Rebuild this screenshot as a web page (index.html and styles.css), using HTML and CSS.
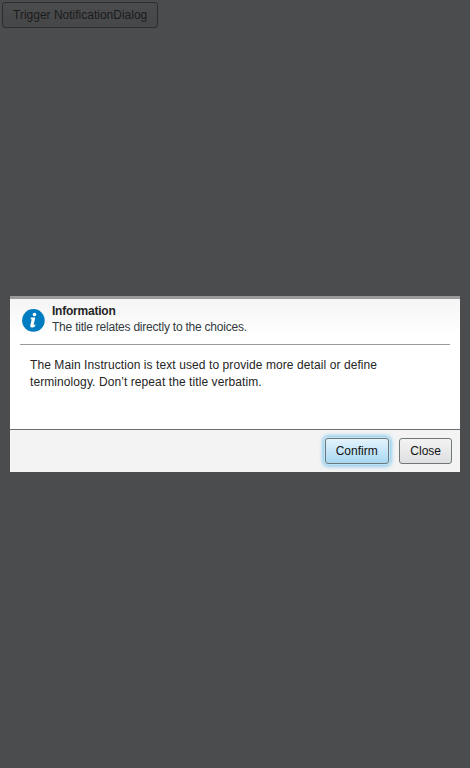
FILE: index.html
```html
<!DOCTYPE html>
<html lang="en">
<head>
<meta charset="utf-8">
<title>NotificationDialog</title>
<link rel="stylesheet" href="styles.css">
</head>
<body>
<button class="btn trigger">Trigger NotificationDialog</button>
<div class="overlay">
  <section class="dialog" role="dialog" aria-labelledby="title">
    <header class="header">
      <svg class="icon" viewBox="0 0 23 23" aria-hidden="true">
        <circle cx="11.4" cy="11.4" r="11.3" fill="#007cc0"/>
        <circle cx="12.5" cy="5.5" r="1.8" fill="#fff"/>
        <path d="M9 8.6h4.3l-1.7 7.5 1.8-.6-.3 1.8q-1.6 1.4-3.5 1.2-1.7-.2-1.3-2l1.4-6.2H8.5z" fill="#fff"/>
      </svg>
      <div>
        <h1 class="title" id="title">Information</h1>
        <p class="subtitle">The title relates directly to the choices.</p>
      </div>
    </header>
    <div class="body">The Main Instruction is text used to provide more detail or define terminology. Don’t repeat the title verbatim.</div>
    <footer class="footer">
      <button class="btn primary">Confirm</button>
      <button class="btn">Close</button>
    </footer>
  </section>
</div>
</body>
</html>
```
FILE: styles.css
```css
* { box-sizing: border-box; }
body {
  margin: 0;
  padding: 2px;
  height: 100vh;
  background: #4a4c4d;
  font: 12px/17px "Liberation Sans", Arial, sans-serif;
  color: #252525;
}
.btn {
  display: block;
  height: 26px;
  padding: 0 10px;
  border: 1px solid #6f7777;
  border-radius: 3px;
  background: linear-gradient(#f3f3f3, #dedfe0);
  font: inherit;
  color: #111;
}
.trigger {
  background: linear-gradient(#4b4c4d, #464749);
  border-color: #2b2d2e;
  color: #1a1b1c;
}
.overlay {
  position: fixed;
  inset: 0;
  display: flex;
  align-items: center;
  justify-content: center;
  padding: 10px;
}
.dialog {
  display: flex;
  flex-direction: column;
  width: 450px;
  height: 176px;
  border-top: 3px solid #9a9a9d;
  background: linear-gradient(#f5f5f5, #fff 36px);
}
.header {
  display: flex;
  gap: 7px;
  height: 46px;
  margin: 0 10px;
  padding: 4px 0 0 2px;
  border-bottom: 1px solid #9a9a9a;
}
.icon { width: 23px; height: 23px; margin-top: 6px; }
.title, .subtitle { margin: 0; font-size: 12px; line-height: 16px; }
.title { letter-spacing: -0.22px; }
.subtitle { letter-spacing: -0.22px; color: #333b40; }
.body { flex: 1; padding: 12px 20px; letter-spacing: 0.085px; }
.footer {
  display: flex;
  justify-content: flex-end;
  gap: 10px;
  height: 43px;
  padding: 8px 8px 0;
  border-top: 1px solid #6d6e70;
  background: #f3f3f3;
}
.primary {
  padding: 0 10.6px 0 9.8px;
  background: linear-gradient(#e4f3fc, #a7d8f3);
  box-shadow: 0 0 0 1px #c0e4f7, 0 0 4px 2px #6fc0ec;
}
```
